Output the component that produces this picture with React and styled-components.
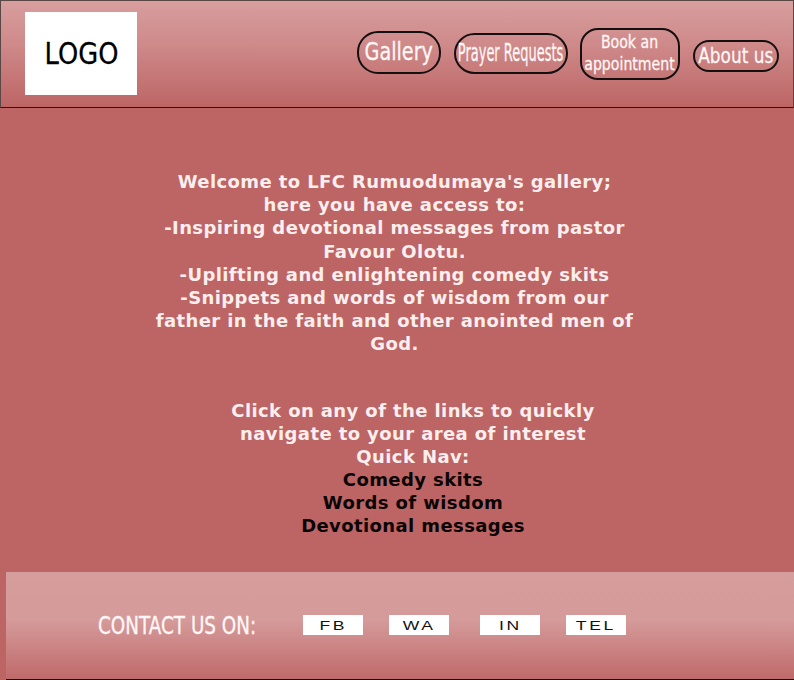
import React from "react";
import styled, { createGlobalStyle } from "styled-components";

const Global = createGlobalStyle`
  html, body { margin: 0; padding: 0; background: #bd6464; }
  body { font-family: "DejaVu Sans", Verdana, sans-serif; }
  * { box-sizing: border-box; }
`;

const Page = styled.div`
  width: 794px;
  height: 680px;
  display: flex;
  flex-direction: column;
  overflow: hidden;
`;

const Header = styled.header`
  height: 108px;
  flex: none;
  display: flex;
  align-items: flex-start;
  padding: 11px 14px 0 24px;
  border: 1px solid #5b4646;
  border-bottom-color: #2a1515;
  background: linear-gradient(to bottom, #d89e9e 0%, #cf8a8a 40%, #bd6565 100%);
`;

const LogoBox = styled.div`
  width: 112px;
  height: 83px;
  background: #ffffff;
  display: flex;
  align-items: center;
  justify-content: center;
  flex: none;
`;

const Stretch = styled.span`
  display: inline-block;
  white-space: nowrap;
  transform: scaleX(${(p) => p.$sx});
  transform-origin: ${(p) => p.$origin || "center"} center;
`;

const LogoText = styled(Stretch)`
  font-size: 31px;
  color: #000;
  line-height: 1;
  -webkit-text-stroke: 0.3px #000;
`;

const Nav = styled.nav`
  margin-left: auto;
  display: flex;
  align-items: flex-start;
  gap: 13px;
`;

const NavButton = styled.a`
  width: ${(p) => p.$w}px;
  height: ${(p) => p.$h}px;
  margin-top: ${(p) => p.$top}px;
  border: 2px solid #141010;
  border-radius: ${(p) => p.$r}px;
  display: flex;
  flex-direction: column;
  align-items: center;
  justify-content: center;
  color: #fff6f6;
  text-decoration: none;
  flex: none;
  margin-left: ${(p) => p.$ml || 0}px;
`;

const NavLabel = styled(Stretch)`
  font-size: ${(p) => p.$fs}px;
  line-height: ${(p) => p.$lh || 1.1};
  text-align: center;
  -webkit-text-stroke: 0.3px #fff6f6;
`;

const Main = styled.main`
  height: 464px;
  flex: none;
  padding-top: 62px;
  display: flex;
  flex-direction: column;
  align-items: stretch;
  gap: 43px;
`;

const TextBlock = styled.div`
  text-align: center;
  font-weight: bold;
  font-size: 18px;
  line-height: ${(p) => p.$lh || 23}px;
  letter-spacing: 0.4px;
  padding-left: ${(p) => p.$pl || 0}px;
  padding-right: ${(p) => p.$pr || 0}px;
`;

const Line = styled.span`
  display: block;
  white-space: nowrap;
  color: ${(p) => (p.$link ? "#0a0505" : "#fbeeee")};
`;

const Footer = styled.footer`
  flex: none;
  height: 108px;
  margin-left: 6px;
  border-bottom: 1px solid #1a0d0d;
  background: linear-gradient(to bottom, #d69d9d 0%, #d59a9a 45%, #c06a6a 100%);
  display: flex;
  align-items: center;
  padding-left: 92px;
  padding-top: 1px;
`;

const ContactLabel = styled.div`
  width: 160px;
  margin-right: 45px;
  color: #fff6f6;
  font-size: 24px;
  line-height: 1;
  flex: none;
  -webkit-text-stroke: 0.35px #fff6f6;
`;

const Socials = styled.div`
  display: flex;
  align-items: center;
  gap: 26px;
`;

const SocialBox = styled.a`
  width: 60px;
  height: 20px;
  background: #ffffff;
  display: flex;
  align-items: center;
  justify-content: center;
  color: #111;
  text-decoration: none;
  margin-left: ${(p) => p.$ml || 0}px;
  margin-top: -2px;
`;

const SocialText = styled(Stretch)`
  font-family: "Liberation Sans", Arial, sans-serif;
  font-size: 13px;
  letter-spacing: 2px;
  line-height: 1;
`;

export default function App() {
  return (
    <>
      <Global />
      <Page>
        <Header>
          <LogoBox>
            <LogoText $sx={0.83}>LOGO</LogoText>
          </LogoBox>
          <Nav>
            <NavButton href="#" $w={84} $h={43} $top={19} $r={21}>
              <NavLabel $fs={24} $sx={0.8}>Gallery</NavLabel>
            </NavButton>
            <NavButton href="#" $w={114} $h={41} $top={21} $r={21}>
              <NavLabel $fs={24} $sx={0.54}>Prayer Requests</NavLabel>
            </NavButton>
            <NavButton href="#" $w={100} $h={52} $top={16} $r={18} $ml={-1}>
              <NavLabel $fs={17} $sx={0.83} $lh={1.27}>
                Book an
                <br />
                appointment
              </NavLabel>
            </NavButton>
            <NavButton href="#" $w={86} $h={32} $top={28} $r={16}>
              <NavLabel $fs={22} $sx={0.77}>About us</NavLabel>
            </NavButton>
          </Nav>
        </Header>
        <Main>
          <TextBlock $pr={5} $lh={23.2}>
            <Line>Welcome to LFC Rumuodumaya's gallery;</Line>
            <Line>here you have access to:</Line>
            <Line>-Inspiring devotional messages from pastor</Line>
            <Line>Favour Olotu.</Line>
            <Line>-Uplifting and enlightening comedy skits</Line>
            <Line>-Snippets and words of wisdom from our</Line>
            <Line>father in the faith and other anointed men of</Line>
            <Line>God.</Line>
          </TextBlock>
          <TextBlock $pl={32}>
            <Line>Click on any of the links to quickly</Line>
            <Line>navigate to your area of interest</Line>
            <Line>Quick Nav:</Line>
            <Line $link>Comedy skits</Line>
            <Line $link>Words of wisdom</Line>
            <Line $link>Devotional messages</Line>
          </TextBlock>
        </Main>
        <Footer>
          <ContactLabel>
            <Stretch $sx={0.765} $origin="left">CONTACT US ON:</Stretch>
          </ContactLabel>
          <Socials>
            <SocialBox href="#">
              <SocialText $sx={1.35}>FB</SocialText>
            </SocialBox>
            <SocialBox href="#">
              <SocialText $sx={1.35}>WA</SocialText>
            </SocialBox>
            <SocialBox href="#" $ml={5}>
              <SocialText $sx={1.35}>IN</SocialText>
            </SocialBox>
            <SocialBox href="#">
              <SocialText $sx={1.35}>TEL</SocialText>
            </SocialBox>
          </Socials>
        </Footer>
      </Page>
    </>
  );
}
